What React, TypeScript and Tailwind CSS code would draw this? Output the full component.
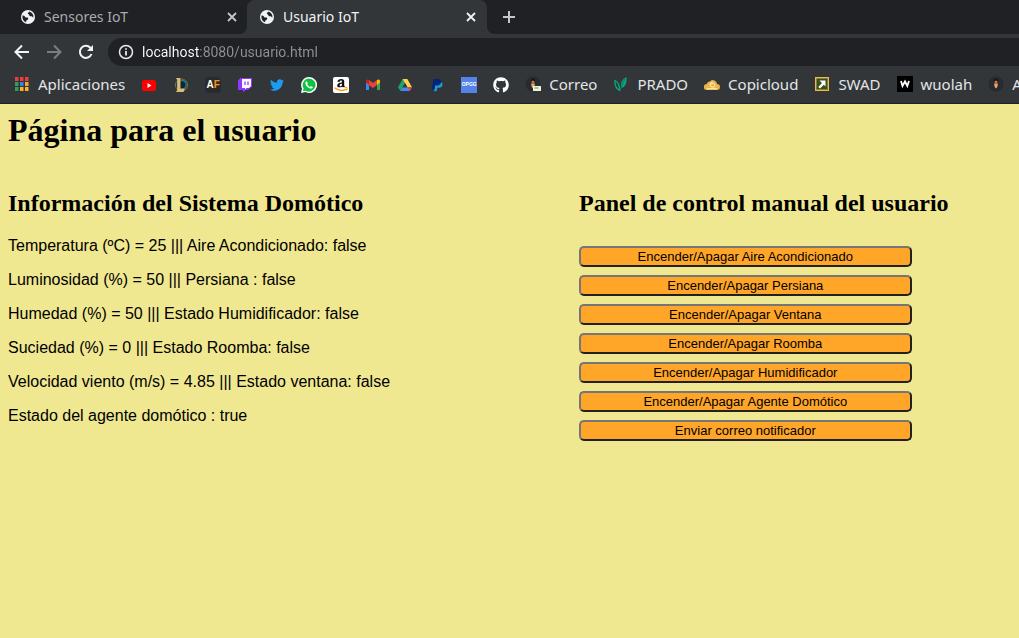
import type { ReactNode } from "react";
import { FaTwitter, FaGithub, FaAmazon } from "react-icons/fa";

function Globe() {
  return (
    <svg viewBox="0 0 16 16" className="size-4 shrink-0" aria-hidden="true">
      <circle cx="8" cy="8" r="7" fill="#f1f3f4" />
      <path
        d="M2.6 6.6C3.6 6.7 4.6 7 5.2 7.9c.5.8 1.4.6 2.2.7.9.2 1 1.1.6 1.8-.4.6-1.3.5-1.6 1.2-.2.5-.2 1.1-.4 1.7C3.800 12.500 2.400 10.400 2.400 8Z M9.300 2.600c-.2 .8-1.200 1-1.500 1.700-.2.700.7.800 1.200 1.100.6.500.2 1.300.8 1.700.7.400 1.600-.1 2.300.3.600.4.600 1.100 1.300 1.200.4-2.700-1.300-5.200-4.100-6Z"
        fill="#202124"
      />
    </svg>
  );
}

function Cross() {
  return (
    <svg viewBox="0 0 16 16" className="size-4" fill="none" stroke="currentColor" strokeWidth="1.800" aria-hidden="true">
      <path d="M4 4l8 8M12 4l-8 8" />
    </svg>
  );
}

function Tab({ title, active }: { title: string; active?: boolean }) {
  return (
    <div
      className={
        active
          ? "relative -ml-px flex h-full w-60 items-center rounded-t-lg bg-[#323639] pl-3 pr-2 text-[#f1f3f4]"
          : "flex h-full w-60 items-center pl-3 pr-2 text-[#a8abb0]"
      }
    >
      {active && (
        <>
          <span className="absolute -left-2 bottom-0 size-2 bg-[radial-gradient(circle_at_0_0,#202124_8px,#323639_8px)]" />
          <span className="absolute -right-2 bottom-0 size-2 bg-[radial-gradient(circle_at_100%_0,#202124_8px,#323639_8px)]" />
        </>
      )}
      <button type="button" role="tab" aria-selected={!!active} className="flex flex-1 items-center gap-2 text-left">
        <Globe />
        <span>{title}</span>
      </button>
      <button type="button" aria-label={`Cerrar ${title}`} className={active ? "text-[#f1f3f4]" : "text-[#c4c7ca]"}>
        <Cross />
      </button>
    </div>
  );
}

function Apps() {
  const colors = ["#f33a3a", "#f33a3a", "#f33a3a", "#2f9e58", "#2f86f3", "#f3a833", "#2f9e58", "#fbb42a", "#fbb42a"];
  return (
    <svg viewBox="0 0 16 16" className="size-4 shrink-0" aria-hidden="true">
      {colors.map((c, i) => (
        <rect key={i} x={1 + (i % 3) * 5} y={1 + Math.floor(i / 3) * 5} width="3.500" height="4" fill={c} />
      ))}
    </svg>
  );
}

function Icon({ children }: { children: ReactNode }) {
  return (
    <svg viewBox="0 0 16 16" className="size-4 shrink-0" aria-hidden="true">
      {children}
    </svg>
  );
}

const youtube = (
  <Icon>
    <rect x="1" y="3" width="14" height="11" rx="2.500" fill="#f00" />
    <path d="M6.500 6v5L10.500 8.500Z" fill="#fff" />
  </Icon>
);
const league = (
  <Icon>
    <circle cx="8.500" cy="8" r="6" fill="#0d3444" stroke="#8b7440" />
    <circle cx="8.800" cy="7.800" r="4.300" fill="#0b2634" stroke="#1d7f95" strokeWidth="1.300" />
    <path d="M3 1h4.500v10.500H12L10.500 15H3l1.200-2V3Z" fill="#dcbd78" />
    <path d="M7.500 1v10.500H12" fill="none" stroke="#80622e" strokeWidth=".5" />
  </Icon>
);
const af = (
  <span className="flex size-4 shrink-0 items-center justify-center rounded-sm bg-[#2a2a2b] font-['Liberation_Sans',sans-serif] text-[10px] leading-none font-bold text-white">
    A<span className="text-[#f7941e]">F</span>
  </span>
);
const twitch = (
  <Icon>
    <path d="M3.500 1H15v8.500L11 13H8.500L6 15.500V13H1V3.500Z" fill="#9137ff" />
    <path d="M5 2h9v7l-2 2H9.500L8 12.500V11H5Z" fill="#fff" />
    <path d="M8 4.500v3.500M11 4.500v3.500" stroke="#9137ff" strokeWidth="1.300" />
  </Icon>
);
const twitter = <FaTwitter className="size-4 shrink-0 p-px text-[#1d9bf0]" />;
const whatsapp = (
  <Icon>
    <path d="M8 0a8 8 0 1 1-3.600 15.100L0 16l1-4.300A8 8 0 0 1 8 0Z" fill="#fff" />
    <path d="M8 1.400a6.600 6.600 0 1 1-3.400 12.300L1.900 14.300l.7-2.800A6.600 6.600 0 0 1 8 1.400Z" fill="#0dc143" />
    <path
      d="M5.700 4.300c-.7 0-1.300.8-1.300 1.600 0 2.500 3.200 5.600 5.500 5.700 1 0 1.900-.7 1.900-1.700L9.900 8.900l-.9 1C7.800 9.400 6.800 8.500 6.300 7.300l.6-.9Z"
      fill="#fff"
    />
  </Icon>
);
const amazon = (
  <Icon>
    <rect width="16" height="16" rx="2" fill="#fff" />
    <svg x="1" y="1" width="14" height="9.300" viewBox="0 0 14 9.300" overflow="hidden">
      <FaAmazon size={14} color="#111" />
    </svg>
    <path d="M1.500 10.800q6 4.600 12 1.200" fill="none" stroke="#ff9900" strokeWidth="1.400" />
    <path d="M11.600 10.700q2.600-.7 2.700 0t-.9 2.700" fill="none" stroke="#ff9900" strokeWidth="1" />
  </Icon>
);
const gmail = (
  <Icon>
    <path d="M1 4.500V13h3V7Z" fill="#4285f4" />
    <path d="M12 7v6h3V4.500Z" fill="#34a853" />
    <path d="M1 5.500V4c0-1.500 1.700-2 2.700-1.200L4 3v5Z" fill="#c5221f" />
    <path d="M4 3l4 3 4-3v5l-4 3-4-3Z" fill="#ea4335" />
    <path d="M12 3c1-1 3-.7 3 1v1.500L12 8Z" fill="#fbbc04" />
  </Icon>
);
const drive = (
  <Icon>
    <path d="M5.700 2H10.300L3.400 14 1 10.200Z" fill="#20a464" />
    <path d="M5.700 2H10.300L15 10.200H10.400Z" fill="#ffd04b" />
    <path d="M3.400 14 5.700 10.200H15L12.600 14Z" fill="#4688f4" />
    <path d="M8 6.200 5.700 10.200h4.700Z" fill="#323639" />
    <path d="M10.400 10.200H15L12.600 14Z" fill="#ea4335" />
  </Icon>
);
const paypal = (
  <Icon>
    <path d="M6.500 5H12q1.800.7 1.500 2.700-.5 3-3.700 3H8.300l-.6 3.600H5Z" fill="#1a9ddb" />
    <path d="M4.500 2H9.200c2.100 0 3.300 1.100 2.900 3.200-.4 2.400-2.100 3.400-4.400 3.400H6.200l-.8 4H2.800Z" fill="#04247a" />
  </Icon>
);
const opgg = (
  <span className="flex size-4 shrink-0 items-center justify-center bg-[#5383e8]">
    <span className="font-['Liberation_Sans',sans-serif] text-[5px] leading-none font-bold text-white">OPGG</span>
  </span>
);
const github = <FaGithub className="size-4 shrink-0 text-white" />;
const person = (
  <>
    <circle cx="8" cy="8" r="7.500" fill="#292a2d" />
    <path d="M6 4q2-3 4 0v4H6Z" fill="#17120f" />
    <ellipse cx="8" cy="6" rx="1.600" ry="1.500" fill="#b77950" />
    <path d="M6 7.500h4L9.300 11 8 12.500 6.700 11Z" fill="#e8a871" />
  </>
);
const correo = (
  <Icon>
    {person}
    <rect x="8" y="10" width="8" height="5" fill="#f1f2dc" />
    <path d="M9.500 12h4" stroke="#45a675" />
  </Icon>
);
const prado = (
  <Icon>
    <path d="M2 4.500Q7 7 6.500 14.500 1.500 12 2 4.500Z" fill="none" stroke="#0ba67e" strokeWidth="1.300" />
    <path d="M13.500 1Q14.500 10 8.500 12 6.500 4.500 13.500 1Z" fill="#0ba67e" />
    <path d="M12 3Q9 7 7 15" fill="none" stroke="#087c62" />
  </Icon>
);
const cloud = (
  <Icon>
    <path d="M3 14a3 3 0 0 1-.3-6Q3.500 5 6 5.500a4 4 0 0 1 7 2.500 3 3 0 0 1 0 6Z" fill="#e8b44c" />
    <path d="M3 12.700h10" stroke="#ffe294" strokeWidth="1.500" />
    <path d="M7 8.700a2 2 0 1 1 2 2.500q-3 0-3-2.500 0-2 2.500-2.500" fill="none" stroke="#fff1bd" />
  </Icon>
);
const swad = (
  <Icon>
    <rect x="1.500" y="1.500" width="13" height="13" fill="#37501c" stroke="#f3b750" />
    <rect x="2.500" y="2.500" width="11" height="11" fill="none" stroke="#b9a440" strokeWidth=".6" />
    <path d="M5.500 4.500h6v6L9.800 8.800 6 12.500 4.300 11 8 7Z" fill="#fff" />
  </Icon>
);
const wuolah = (
  <Icon>
    <path d="M0 0h16v16H0Z" fill="#000" />
    <path d="M4 5l1.500 5L8 5.500l2.300 4.500L12 5" fill="none" stroke="#fff" strokeWidth="1.800" />
  </Icon>
);

const shortcuts: [string, ReactNode][] = [
  ["YouTube", youtube],
  ["League of Legends", league],
  ["AF", af],
  ["Twitch", twitch],
  ["Twitter", twitter],
  ["WhatsApp", whatsapp],
  ["Amazon", amazon],
  ["Gmail", gmail],
  ["Google Drive", drive],
  ["PayPal", paypal],
  ["OP.GG", opgg],
  ["GitHub", github],
];

const bookmarks: [string, ReactNode][] = [
  ["Correo", correo],
  ["PRADO", prado],
  ["Copicloud", cloud],
  ["SWAD", swad],
  ["wuolah", wuolah],
  ["A", <Icon>{person}</Icon>],
];

const readings = [
  "Temperatura (ºC) = 25 ||| Aire Acondicionado: false",
  "Luminosidad (%) = 50 ||| Persiana : false",
  "Humedad (%) = 50 ||| Estado Humidificador: false",
  "Suciedad (%) = 0 ||| Estado Roomba: false",
  "Velocidad viento (m/s) = 4.85 ||| Estado ventana: false",
  "Estado del agente domótico : true",
];

const actions = [
  "Encender/Apagar Aire Acondicionado",
  "Encender/Apagar Persiana",
  "Encender/Apagar Ventana",
  "Encender/Apagar Roomba",
  "Encender/Apagar Humidificador",
  "Encender/Apagar Agente Domótico",
  "Enviar correo notificador",
];

export default function App() {
  return (
    <div className="flex min-h-screen flex-col overflow-x-hidden bg-[#f0e891]">
      <header className="border-b border-[#202124] bg-[#323639] font-['Noto_Sans',sans-serif] text-sm text-[#e3e5e7]">
        <div role="tablist" className="flex h-[34px] items-center bg-[#202124] pl-2">
          <Tab title="Sensores IoT" />
          <Tab title="Usuario IoT" active />
          <button type="button" aria-label="Nueva pestaña" className="ml-3.5 text-[#c4c7ca]">
            <svg viewBox="0 0 16 16" className="size-4" fill="none" stroke="currentColor" strokeWidth="2" aria-hidden="true">
              <path d="M8 2v12M2 8h12" />
            </svg>
          </button>
        </div>

        <nav className="flex items-center pt-1 pl-3.5">
          <div className="flex gap-4 pr-3.5">
            <button type="button" aria-label="Atrás" className="text-[#f1f3f4]">
              <svg viewBox="0 0 16 16" className="size-4" fill="none" stroke="currentColor" strokeWidth="2" aria-hidden="true">
                <path d="M15 8H2.500M8 1.500 1.500 8 8 14.500" />
              </svg>
            </button>
            <button type="button" aria-label="Adelante" className="text-[#7b7e81]">
              <svg viewBox="0 0 16 16" className="size-4" fill="none" stroke="currentColor" strokeWidth="2" aria-hidden="true">
                <path d="M1 8h12.500M8 1.500 14.500 8 8 14.500" />
              </svg>
            </button>
            <button type="button" aria-label="Recargar" className="text-[#f1f3f4]">
              <svg viewBox="0 0 16 16" className="size-4" fill="none" stroke="currentColor" strokeWidth="2" aria-hidden="true">
                <path d="M13.500 10A6 6 0 1 1 12.300 3.800L13.500 5" />
                <path d="M15 1v6H9Z" fill="currentColor" stroke="none" />
              </svg>
            </button>
          </div>
          <div className="flex h-7 flex-1 items-center gap-2 rounded-l-full bg-[#202124] pl-2.5">
            <svg viewBox="0 0 16 16" className="size-4" fill="none" stroke="#e8eaed" strokeWidth="1.500" aria-hidden="true">
              <circle cx="8" cy="8" r="6.500" />
              <path d="M8 7v4.500M8 4.200v1.600" strokeWidth="1.800" />
            </svg>
            <input
              type="text"
              aria-label="Dirección"
              defaultValue="localhost:8080/usuario.html"
              className="h-7 flex-1 bg-[linear-gradient(90deg,#ffffff_58px,#8e9297_58px)] bg-clip-text font-['Roboto',sans-serif] text-sm text-transparent outline-none"
            />
          </div>
        </nav>

        <nav
          aria-label="Marcadores"
          className="flex h-[37px] items-center gap-4 overflow-hidden pl-3.5 text-[15px] whitespace-nowrap"
        >
          <a href="#aplicaciones" className="flex items-center gap-2">
            <Apps />
            Aplicaciones
          </a>
          {shortcuts.map(([name, icon]) => (
            <a key={name} href="#" aria-label={name}>
              {icon}
            </a>
          ))}
          {bookmarks.map(([name, icon]) => (
            <a key={name} href="#" className="flex items-center gap-2">
              {icon}
              {name}
            </a>
          ))}
        </nav>
      </header>

      <main className="flex-1 p-2 text-black">
        <h1 className="font-['Liberation_Serif',serif] text-[32px] leading-[37px] font-bold">Página para el usuario</h1>
        <div className="mt-[41px] grid grid-cols-[1fr_432px]">
          <section>
            <h2 className="font-['Liberation_Serif',serif] text-2xl leading-[27px] font-bold">
              Información del Sistema Domótico
            </h2>
            <div className="mt-5 flex flex-col gap-4 font-['Liberation_Sans',sans-serif] text-base leading-[18px]">
              {readings.map((line) => (
                <p key={line}>{line}</p>
              ))}
            </div>
          </section>
          <section>
            <h2 className="font-['Liberation_Serif',serif] text-2xl leading-[27px] font-bold">
              Panel de control manual del usuario
            </h2>
            <div className="mt-[29px] flex w-[77%] flex-col gap-2">
              {actions.map((label) => (
                <button
                  key={label}
                  type="button"
                  className="rounded-[5px] border-2 border-t-[#767676] border-r-[#212121] border-b-[#212121] border-l-[#767676] bg-[#ffa628] px-1.5 py-px font-['Liberation_Sans',sans-serif] text-[13px] leading-[15px]"
                >
                  {label}
                </button>
              ))}
            </div>
          </section>
        </div>
      </main>
    </div>
  );
}
